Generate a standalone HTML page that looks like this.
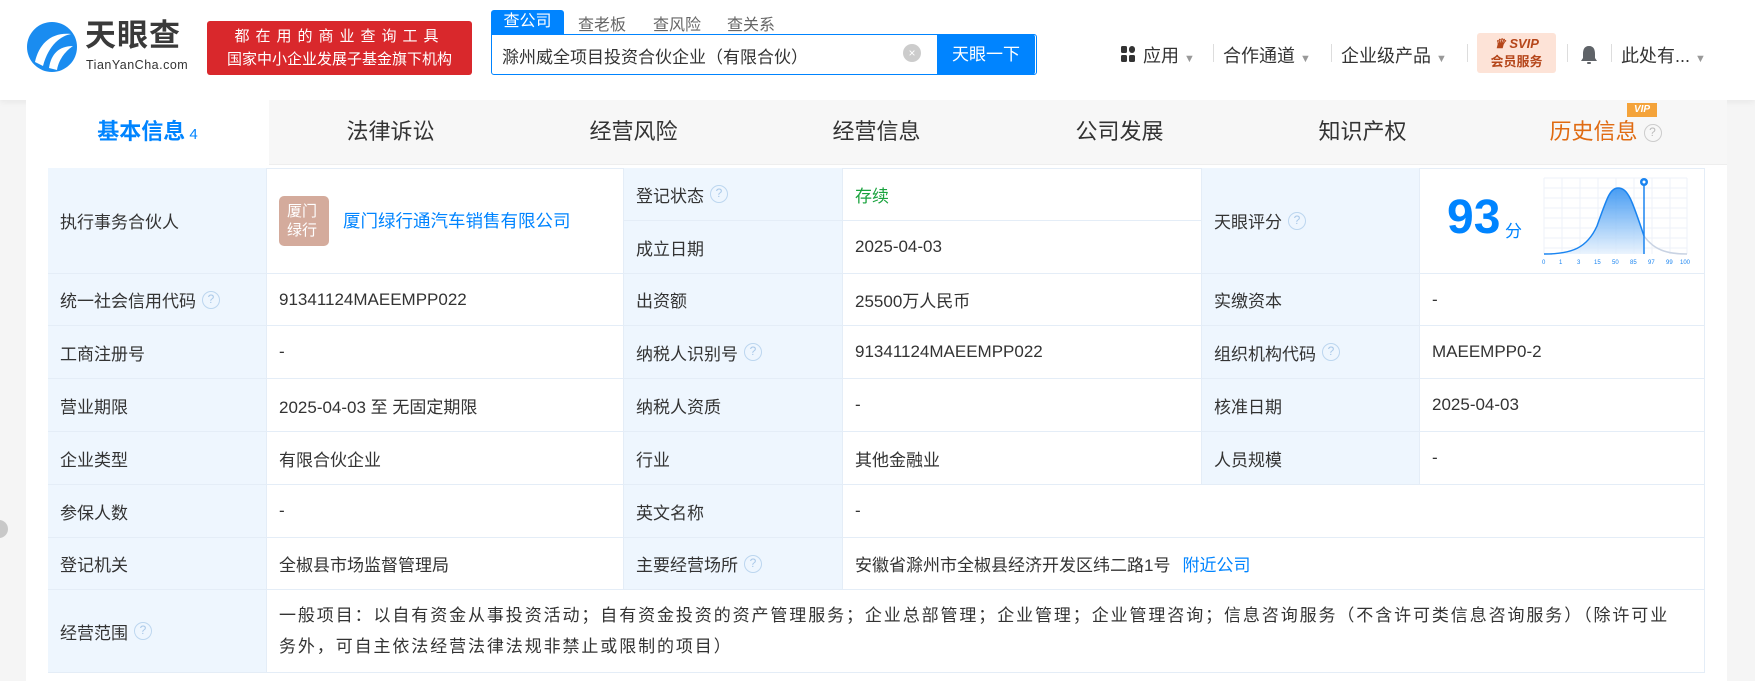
<!DOCTYPE html>
<html><head><meta charset="utf-8"><style>
*{margin:0;padding:0;box-sizing:border-box}
body{width:1755px;height:681px;overflow:hidden;background:#f5f5f5;font-family:"Liberation Sans","Noto Sans CJK SC",sans-serif;color:#333;position:relative}
.hdr{position:absolute;left:0;top:0;width:1755px;height:100px;background:#fff;box-shadow:0 2px 6px rgba(0,0,0,.06)}
.abs{position:absolute}
.t{position:absolute;white-space:nowrap}
.card{position:absolute;left:26px;top:100px;width:1701px;height:581px;background:#fff}
.tabs{position:absolute;left:26px;top:100px;width:1701px;height:65px;background:#f7f7f7;border-bottom:1px solid #eee}
.tab{position:absolute;top:100px;width:243px;height:65px;line-height:64px;text-align:center;font-size:22px;color:#333}
.cell{position:absolute;border-right:1px solid #e4edf7;border-bottom:1px solid #e4edf7;font-size:17px;padding-left:12px;display:flex;align-items:center;color:#333}
.lb{background:#eef6fe}
.q{display:inline-block;width:18px;height:18px;border:1.5px solid #bcd6ef;border-radius:50%;color:#a9c8e8;font-size:12px;text-align:center;line-height:15px;margin-left:6px}
</style></head><body>
<div class="hdr"></div>
<!-- logo -->
<svg class="abs" style="left:27px;top:22px" width="50" height="50" viewBox="0 0 50 50"><circle cx="25" cy="25" r="25" fill="#1a8cf0"/><path d="M8 40 C12 22 24 10 44 12 C34 14 22 22 16 44Z" fill="#fff"/><path d="M22 46 C24 32 32 24 46 24 C40 28 32 36 30 48Z" fill="#fff"/></svg>
<div class="t" style="left:85px;top:18px;font-size:31px;font-weight:bold;color:#3a3a3a;letter-spacing:1px;line-height:36px">天眼查</div>
<div class="t" style="left:86px;top:58px;font-size:12.5px;color:#333;letter-spacing:.5px">TianYanCha.com</div>
<div class="abs" style="left:207px;top:21px;width:265px;height:54px;background:#d9282c;border-radius:3px;color:#fff;text-align:center;font-size:15px;line-height:23px;padding-top:4px"><div style="letter-spacing:6px">都在用的商业查询工具</div><div>国家中小企业发展子基金旗下机构</div></div>
<div class="abs" style="left:491px;top:10px;width:73px;height:25px;background:#0084ff;border-radius:3px 3px 0 0;color:#fff;font-size:16px;text-align:center;line-height:24px">查公司</div>
<div class="t" style="left:578px;top:11px;font-size:16px;color:#666">查老板</div>
<div class="t" style="left:653px;top:11px;font-size:16px;color:#666">查风险</div>
<div class="t" style="left:727px;top:11px;font-size:16px;color:#666">查关系</div>
<div class="abs" style="left:491px;top:34px;width:546px;height:41px;border:1.5px solid #0084ff;border-radius:0 3px 3px 3px"></div>
<div class="t" style="left:502px;top:43px;font-size:17px;color:#333">滁州威全项目投资合伙企业（有限合伙）</div>
<div class="abs" style="left:903px;top:44px;width:18px;height:18px;border-radius:50%;background:#ccc;color:#fff;font-size:12px;text-align:center;line-height:18px">×</div>
<div class="abs" style="left:937px;top:34px;width:98px;height:41px;background:#0084ff;border-radius:0 3px 3px 0;color:#fff;font-size:17px;text-align:center;line-height:41px">天眼一下</div>
<svg class="abs" style="left:1121px;top:46px" width="15" height="16"><rect x="0" y="0" width="6" height="7" rx="1.5" fill="#333"/><rect x="8" y="0" width="6" height="7" rx="3" fill="#333"/><rect x="0" y="9" width="6" height="7" rx="1.5" fill="#333"/><rect x="8" y="9" width="6" height="7" rx="1.5" fill="#333"/></svg>
<div class="t" style="left:1143px;top:42px;font-size:18px">应用 <span style="color:#999;font-size:11px">▼</span></div>
<div class="abs" style="left:1213px;top:44px;width:1px;height:18px;background:#ddd"></div>
<div class="t" style="left:1223px;top:42px;font-size:18px">合作通道 <span style="color:#999;font-size:11px">▼</span></div>
<div class="abs" style="left:1331px;top:44px;width:1px;height:18px;background:#ddd"></div>
<div class="t" style="left:1341px;top:42px;font-size:18px">企业级产品 <span style="color:#999;font-size:11px">▼</span></div>
<div class="abs" style="left:1467px;top:44px;width:1px;height:18px;background:#ddd"></div>
<div class="abs" style="left:1477px;top:33px;width:79px;height:40px;background:#fde3d7;border-radius:3px;color:#b5461a;text-align:center;font-weight:bold"><div style="font-size:13px;line-height:18px;padding-top:2px;font-style:italic">♛ SVIP</div><div style="font-size:13px;line-height:18px">会员服务</div></div>
<div class="abs" style="left:1567px;top:44px;width:1px;height:18px;background:#ddd"></div>
<svg class="abs" style="left:1580px;top:45px" width="18" height="20"><path d="M9 1 C4 1 3 5 3 9 L3 13 L1 16 L17 16 L15 13 L15 9 C15 5 14 1 9 1Z" fill="#5f6368"/><rect x="7" y="17" width="4" height="2" rx="1" fill="#5f6368"/></svg>
<div class="abs" style="left:1611px;top:44px;width:1px;height:18px;background:#ddd"></div>
<div class="t" style="left:1621px;top:42px;font-size:18px">此处有... <span style="color:#999;font-size:11px">▼</span></div>

<div class="card"></div>
<div class="tabs"></div>
<div class="tab" style="left:26px;background:#fff;color:#0084ff;font-weight:bold">基本信息<span style="font-size:15px;font-weight:normal"> 4</span></div>
<div class="tab" style="left:269px">法律诉讼</div>
<div class="tab" style="left:512px">经营风险</div>
<div class="tab" style="left:755px">经营信息</div>
<div class="tab" style="left:998px">公司发展</div>
<div class="tab" style="left:1241px">知识产权</div>
<div class="tab" style="left:1484px;color:#e06b12">历史信息<span class="q" style="border-color:#ccc;color:#bbb;vertical-align:3px">?</span></div>
<div class="abs" style="left:1627px;top:103px;width:30px;height:14px;background:#f4a33a;color:#fff;font-size:10px;font-weight:bold;font-style:italic;text-align:center;line-height:14px">VIP</div>

<div class="abs" style="left:48px;top:168px;width:1657px;height:505px;border-left:1px solid #e4edf7;border-top:1px solid #e4edf7"></div>
<!-- row1 -->
<div class="cell lb" style="left:48px;top:168px;width:219px;height:106px">执行事务合伙人</div>
<div class="cell" style="left:267px;top:168px;width:357px;height:106px"><div style="width:50px;height:50px;background:#d4ab9c;border-radius:5px;color:#fff;font-size:15px;line-height:19px;padding:6px 0 0 8px">厦门<br>绿行</div><span style="color:#0084ff;margin-left:14px;font-size:17.5px">厦门绿行通汽车销售有限公司</span></div>
<div class="cell lb" style="left:624px;top:168px;width:219px;height:53px">登记状态<span class="q">?</span></div>
<div class="cell" style="left:843px;top:168px;width:359px;height:53px;color:#1aa33e">存续</div>
<div class="cell lb" style="left:624px;top:221px;width:219px;height:53px">成立日期</div>
<div class="cell" style="left:843px;top:221px;width:359px;height:53px">2025-04-03</div>
<div class="cell lb" style="left:1202px;top:168px;width:218px;height:106px">天眼评分<span class="q">?</span></div>
<div class="cell" style="left:1420px;top:168px;width:285px;height:106px"></div>
<div class="t" style="left:1447px;top:190px;font-size:48px;font-weight:bold;color:#0084ff">93</div>
<div class="t" style="left:1505px;top:217px;font-size:17px;color:#0084ff">分</div>
<svg class="abs" style="left:1542px;top:176px" width="150" height="92" viewBox="0 0 150 92">
<defs><linearGradient id="g" x1="0" y1="0" x2="0" y2="1"><stop offset="0" stop-color="#1a84f0"/><stop offset="1" stop-color="#e6f1fd"/></linearGradient></defs>
<g stroke="#edf2f8" stroke-width="1" fill="none"><path d="M2 2H145M2 12H145M2 22H145M2 32H145M2 42H145M2 52H145M2 62H145M2 72H145M2 2V78M20 2V78M38 2V78M56 2V78M74 2V78M92 2V78M110 2V78M128 2V78M145 2V78"/></g>
<path d="M2 78 C30 78 45 72 55 50 C65 22 68 12 76 12 C86 12 90 24 102 60 L102 78Z" fill="url(#g)" opacity=".8"/>
<path d="M2 78 C30 78 45 72 55 50 C65 22 68 12 76 12 C86 12 90 24 102 60" stroke="#1a84f0" stroke-width="1.5" fill="none"/>
<path d="M102 60 C112 74 125 78 145 78" stroke="#c9d3e3" stroke-width="1.5" fill="none"/>
<line x1="102" y1="8" x2="102" y2="78" stroke="#1a84f0" stroke-width="1.5"/><circle cx="102" cy="6" r="4" fill="#1a84f0"/><circle cx="102" cy="6" r="1.5" fill="#fff"/>
<g font-size="6" fill="#1a84f0" font-family="Liberation Sans"><text x="0" y="88">0</text><text x="17" y="88">1</text><text x="35" y="88">3</text><text x="52" y="88">15</text><text x="70" y="88">50</text><text x="88" y="88">85</text><text x="106" y="88">97</text><text x="124" y="88">99</text><text x="138" y="88">100</text></g>
</svg>
<!-- rows -->
<div class="cell lb" style="left:48px;top:274px;width:219px;height:52px">统一社会信用代码<span class="q">?</span></div>
<div class="cell" style="left:267px;top:274px;width:357px;height:52px">91341124MAEEMPP022</div>
<div class="cell lb" style="left:624px;top:274px;width:219px;height:52px">出资额</div>
<div class="cell" style="left:843px;top:274px;width:359px;height:52px">25500万人民币</div>
<div class="cell lb" style="left:1202px;top:274px;width:218px;height:52px">实缴资本</div>
<div class="cell" style="left:1420px;top:274px;width:285px;height:52px">-</div>

<div class="cell lb" style="left:48px;top:326px;width:219px;height:53px">工商注册号</div>
<div class="cell" style="left:267px;top:326px;width:357px;height:53px">-</div>
<div class="cell lb" style="left:624px;top:326px;width:219px;height:53px">纳税人识别号<span class="q">?</span></div>
<div class="cell" style="left:843px;top:326px;width:359px;height:53px">91341124MAEEMPP022</div>
<div class="cell lb" style="left:1202px;top:326px;width:218px;height:53px">组织机构代码<span class="q">?</span></div>
<div class="cell" style="left:1420px;top:326px;width:285px;height:53px">MAEEMPP0-2</div>

<div class="cell lb" style="left:48px;top:379px;width:219px;height:53px">营业期限</div>
<div class="cell" style="left:267px;top:379px;width:357px;height:53px">2025-04-03 至 无固定期限</div>
<div class="cell lb" style="left:624px;top:379px;width:219px;height:53px">纳税人资质</div>
<div class="cell" style="left:843px;top:379px;width:359px;height:53px">-</div>
<div class="cell lb" style="left:1202px;top:379px;width:218px;height:53px">核准日期</div>
<div class="cell" style="left:1420px;top:379px;width:285px;height:53px">2025-04-03</div>

<div class="cell lb" style="left:48px;top:432px;width:219px;height:53px">企业类型</div>
<div class="cell" style="left:267px;top:432px;width:357px;height:53px">有限合伙企业</div>
<div class="cell lb" style="left:624px;top:432px;width:219px;height:53px">行业</div>
<div class="cell" style="left:843px;top:432px;width:359px;height:53px">其他金融业</div>
<div class="cell lb" style="left:1202px;top:432px;width:218px;height:53px">人员规模</div>
<div class="cell" style="left:1420px;top:432px;width:285px;height:53px">-</div>

<div class="cell lb" style="left:48px;top:485px;width:219px;height:53px">参保人数</div>
<div class="cell" style="left:267px;top:485px;width:357px;height:53px">-</div>
<div class="cell lb" style="left:624px;top:485px;width:219px;height:53px">英文名称</div>
<div class="cell" style="left:843px;top:485px;width:862px;height:53px">-</div>

<div class="cell lb" style="left:48px;top:538px;width:219px;height:52px">登记机关</div>
<div class="cell" style="left:267px;top:538px;width:357px;height:52px">全椒县市场监督管理局</div>
<div class="cell lb" style="left:624px;top:538px;width:219px;height:52px">主要经营场所<span class="q">?</span></div>
<div class="cell" style="left:843px;top:538px;width:862px;height:52px">安徽省滁州市全椒县经济开发区纬二路1号<span style="color:#0084ff;margin-left:12px">附近公司</span></div>

<div class="cell lb" style="left:48px;top:590px;width:219px;height:83px">经营范围<span class="q">?</span></div>
<div class="cell" style="left:267px;top:590px;width:1438px;height:83px;line-height:31px;padding-right:14px"><div style="white-space:nowrap;letter-spacing:1.9px">一般项目：以自有资金从事投资活动；自有资金投资的资产管理服务；企业总部管理；企业管理；企业管理咨询；信息咨询服务（不含许可类信息咨询服务）（除许可业<br>务外，可自主依法经营法律法规非禁止或限制的项目）</div></div>
<div class="abs" style="left:-10px;top:520px;width:18px;height:18px;border-radius:50%;background:#c8c8c8"></div>
</body></html>
